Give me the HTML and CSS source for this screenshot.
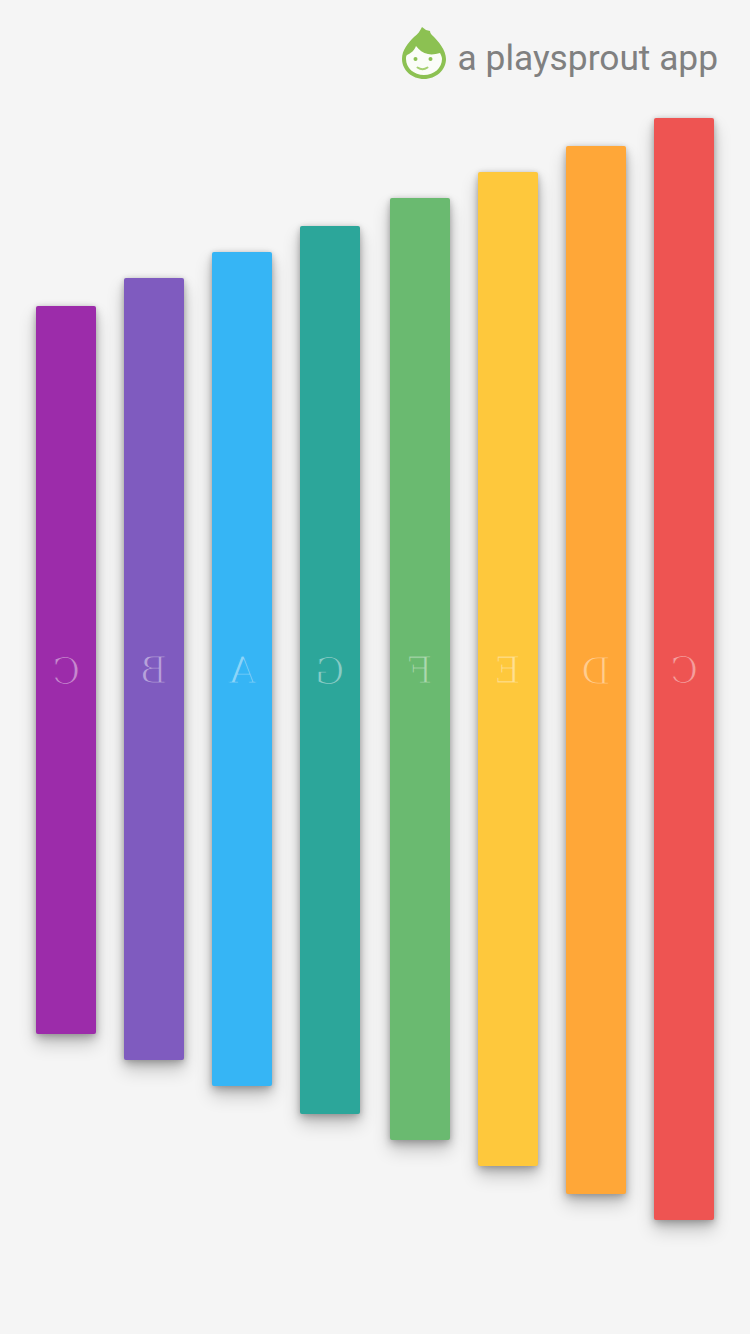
FILE: index.html
```html
<!DOCTYPE html>
<html lang="en">

<head>
  <meta charset="UTF-8">
  <meta name="viewport" content="width=device-width, initial-scale=1.0">
  <title>Xylophone</title>

  <link rel="stylesheet" href="styles.css">
</head>

<body>
  <header class="brand">
    <svg class="brand-logo" viewBox="0 0 44 53" aria-hidden="true">
      <path fill="#8cc152" d="M20 1l4 3 4 1c0 2 1 3 3 5 5 5 13 14 13 23 0 11-10 20-22 20S0 44 0 33C0 24 6 17 12 11c4-3 6-6 8-10z" />
      <path fill="#fbfdf8" d="M14 20c3 4 7 7 12 8 4 1 8 0 12-1 1 2 2 4 2 6 0 9-8 16-18 16S4 42 4 33c0-2 0-3 1-4 4-2 7-4 9-9z" />
      <circle fill="#8cc152" cx="13.500" cy="33" r="2" />
      <circle fill="#8cc152" cx="28.500" cy="33" r="2" />
      <path fill="none" stroke="#a6d071" stroke-width="2" stroke-linecap="round" d="M15.500 41.500c3 2 7 2 10 0" />
    </svg>
    <span class="brand-name">a playsprout app</span>
  </header>

  <main class="keys">
    <div class="key key-c-low"><span>C</span></div>
    <div class="key key-b"><span>B</span></div>
    <div class="key key-a"><span>A</span></div>
    <div class="key key-g"><span>G</span></div>
    <div class="key key-f"><span>F</span></div>
    <div class="key key-e"><span>E</span></div>
    <div class="key key-d"><span>D</span></div>
    <div class="key key-c-high"><span>C</span></div>
  </main>
</body>

</html>
```

FILE: styles.css
```css
body {
  margin: 0;
  height: 1334px;
  overflow: hidden;
  background-color: #f5f5f5;
  font-family: Roboto, sans-serif;
}

.brand {
  display: flex;
  justify-content: flex-end;
  align-items: center;
  gap: 12px;
  height: 118px;
  box-sizing: border-box;
  padding: 26px 32px 39px 0;
}

.brand-logo {
  width: 44px;
  height: 53px;
}

.brand-name {
  padding-top: 10px;
  font-size: 35.300px;
  font-weight: 400;
  color: #808080;
  white-space: nowrap;
}

.keys {
  display: flex;
  align-items: center;
  gap: 28px;
  height: 1102px;
  padding-left: 36px;
}

.key {
  display: flex;
  justify-content: center;
  align-items: center;
  width: 60px;
  border-radius: 2px;
  background-color: var(--key-color);
  box-shadow: 0 10px 18px rgba(0, 0, 0, 0.2), 0 4px 8px rgba(0, 0, 0, 0.22), 0 0 5px rgba(0, 0, 0, 0.12);
}

/* the stroke in the key colour eats into the glyph, so the letter looks thin */
.key span {
  margin-top: 2px;
  font-family: "DejaVu Serif", serif;
  font-size: 37px;
  line-height: 1;
  color: rgba(255, 255, 255, 0.45);
  -webkit-text-stroke: 1.200px var(--key-color);
  transform: scaleX(-1);
}

.key-c-low {
  --key-color: #9c2caa;
  height: 728px;
  margin-top: 2px;
}

.key-b {
  --key-color: #7f5bbf;
  height: 782px;
}

.key-a {
  --key-color: #36b5f5;
  height: 834px;
}

.key-g {
  --key-color: #2ca69a;
  height: 888px;
  margin-top: 2px;
  margin-right: 2px;
}

.key-f {
  --key-color: #6aba70;
  height: 942px;
}

.key-e {
  --key-color: #fec83c;
  height: 994px;
}

.key-d {
  --key-color: #ffa738;
  height: 1048px;
  margin-top: 2px;
}

.key-c-high {
  --key-color: #ee5452;
  height: 1102px;
}
```
